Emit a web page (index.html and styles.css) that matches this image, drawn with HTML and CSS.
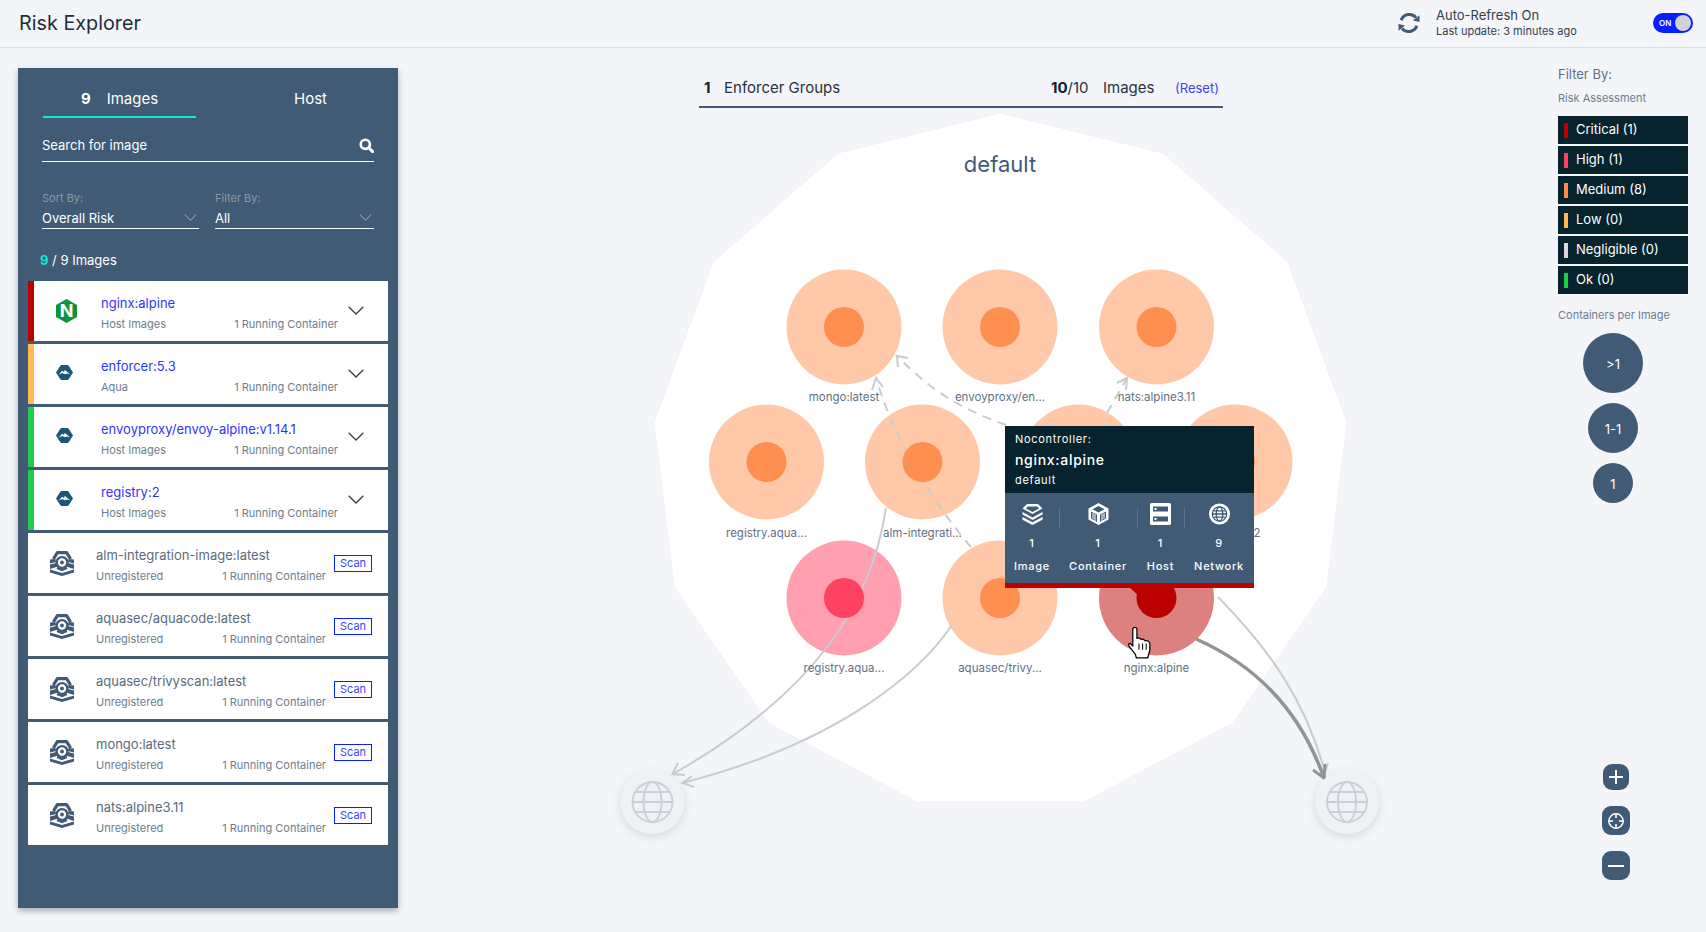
FILE: index.html
```html
<!DOCTYPE html>
<html lang="en">
<head>
<meta charset="utf-8">
<title>Risk Explorer</title>
<link rel="stylesheet" href="styles.css">
</head>
<body>
<svg class="defs" width="0" height="0" aria-hidden="true">
  <symbol id="i-aqua" viewBox="0 0 17 15">
    <path d="M5 .5h7L16.5 7.5 12 14.5H5L.5 7.5z" fill="#1c5678" stroke="#1c5678" stroke-linejoin="round"/>
    <path d="M2.6 9.6 6.2 5.8 7.6 6.9 8.9 4.9 14.4 9.6 11.4 8.4 8.9 9.2 6.3 8.1z" fill="#fff"/>
  </symbol>
  <symbol id="i-scan" viewBox="0 0 24 25">
    <path d="M3.4 8 7.4 1.600h9.200L20.600 8" fill="none" stroke="#415a75" stroke-width="3.200" stroke-linejoin="round"/>
    <path d="M0 8.500 5.500 8 6 11 0 12.500zM24 8.500 18.500 8 18 11 24 12.500zM0 13.500l6-1.500 2 3.500L0 18zM24 13.500l-6-1.500-2 3.500 8 2.500z" fill="#415a75"/>
    <circle cx="12" cy="11.500" r="5.400" fill="#fff" stroke="#415a75" stroke-width="2.400"/>
    <circle cx="12" cy="11.500" r="1.900" fill="#415a75"/>
    <path d="M0 18.500 12 22l12-3.500v3L12 25 0 21.500z" fill="#415a75"/>
    <path d="M7 17 12 19l5-2" fill="none" stroke="#415a75" stroke-width="2.200"/>
  </symbol>
  <symbol id="i-chev" viewBox="0 0 16 9">
    <path d="M.7.7 8 8 15.3.7" fill="none" stroke="currentColor" stroke-width="1.3"/>
  </symbol>
</svg>

<header class="topbar">
  <h1 class="page-title">Risk Explorer</h1>
  <svg class="refresh" viewBox="0 0 22 22">
    <path d="M3.2 8.2A8.6 8.6 0 0 1 18 5.6" fill="none" stroke="#415a75" stroke-width="3"/>
    <path d="M18.8 13.8A8.6 8.6 0 0 1 4 16.4" fill="none" stroke="#415a75" stroke-width="3"/>
    <path d="M21.5 3.2 21.5 10 15 8.4zM.5 18.8.5 12 7 13.6z" fill="#415a75"/>
  </svg>
  <div class="refresh-text">
    <div class="refresh-title">Auto-Refresh On</div>
    <div class="refresh-sub">Last update: 3 minutes ago</div>
  </div>
  <div class="toggle"><span class="toggle-label">ON</span><span class="toggle-knob"></span></div>
</header>

<main class="main">
  <aside class="sidebar">
    <div class="side-head">
      <div class="tabs">
        <div class="tab tab-active"><b class="tab-num">9</b>Images</div>
        <div class="tab tab-other">Host</div>
      </div>
      <div class="search">
        <span>Search for image</span>
        <svg class="search-icon" viewBox="0 0 15 15">
          <circle cx="6.3" cy="6.3" r="4.6" fill="none" stroke="#fff" stroke-width="2.6"/>
          <path d="M9.8 9.8 13.6 13.6" stroke="#fff" stroke-width="3" stroke-linecap="round"/>
        </svg>
      </div>
      <div class="selects">
        <div class="select select-a">
          <div class="select-label">Sort By:</div>
          <div class="select-value"><span>Overall Risk</span><svg class="select-chev"><use href="#i-chev"/></svg></div>
        </div>
        <div class="select select-b">
          <div class="select-label">Filter By:</div>
          <div class="select-value"><span>All</span><svg class="select-chev"><use href="#i-chev"/></svg></div>
        </div>
      </div>
      <div class="count"><b class="count-num">9</b> / 9 Images</div>
    </div>
    <ul class="list">
      <li class="item item-risk bar-critical">
        <svg class="logo-n" viewBox="0 0 21 24">
          <polygon points="10.5,0 21,6 21,18 10.5,24 0,18 0,6" fill="#0b9440"/>
          <text x="10.5" y="18" class="logo-n-text">N</text>
        </svg>
        <div class="item-body"><div class="item-title link">nginx:alpine</div><div class="item-sub"><span>Host Images</span><span>1 Running Container</span></div></div>
        <svg class="item-chev"><use href="#i-chev"/></svg>
      </li>
      <li class="item item-risk bar-low">
        <svg class="logo-a"><use href="#i-aqua"/></svg>
        <div class="item-body"><div class="item-title link">enforcer:5.3</div><div class="item-sub"><span>Aqua</span><span>1 Running Container</span></div></div>
        <svg class="item-chev"><use href="#i-chev"/></svg>
      </li>
      <li class="item item-risk bar-ok">
        <svg class="logo-a"><use href="#i-aqua"/></svg>
        <div class="item-body"><div class="item-title link">envoyproxy/envoy-alpine:v1.14.1</div><div class="item-sub"><span>Host Images</span><span>1 Running Container</span></div></div>
        <svg class="item-chev"><use href="#i-chev"/></svg>
      </li>
      <li class="item item-risk bar-ok">
        <svg class="logo-a"><use href="#i-aqua"/></svg>
        <div class="item-body"><div class="item-title link">registry:2</div><div class="item-sub"><span>Host Images</span><span>1 Running Container</span></div></div>
        <svg class="item-chev"><use href="#i-chev"/></svg>
      </li>
      <li class="item item-plain">
        <svg class="logo-s"><use href="#i-scan"/></svg>
        <div class="item-body body-plain"><div class="item-title">alm-integration-image:latest</div><div class="item-sub"><span>Unregistered</span><span>1 Running Container</span></div></div>
        <div class="scan">Scan</div>
      </li>
      <li class="item item-plain">
        <svg class="logo-s"><use href="#i-scan"/></svg>
        <div class="item-body body-plain"><div class="item-title">aquasec/aquacode:latest</div><div class="item-sub"><span>Unregistered</span><span>1 Running Container</span></div></div>
        <div class="scan">Scan</div>
      </li>
      <li class="item item-plain">
        <svg class="logo-s"><use href="#i-scan"/></svg>
        <div class="item-body body-plain"><div class="item-title">aquasec/trivyscan:latest</div><div class="item-sub"><span>Unregistered</span><span>1 Running Container</span></div></div>
        <div class="scan">Scan</div>
      </li>
      <li class="item item-plain">
        <svg class="logo-s"><use href="#i-scan"/></svg>
        <div class="item-body body-plain"><div class="item-title">mongo:latest</div><div class="item-sub"><span>Unregistered</span><span>1 Running Container</span></div></div>
        <div class="scan">Scan</div>
      </li>
      <li class="item item-plain">
        <svg class="logo-s"><use href="#i-scan"/></svg>
        <div class="item-body body-plain"><div class="item-title">nats:alpine3.11</div><div class="item-sub"><span>Unregistered</span><span>1 Running Container</span></div></div>
        <div class="scan">Scan</div>
      </li>
    </ul>
  </aside>

  <section class="stage">
    <div class="stage-head">
      <b class="sh-num">1</b><span class="sh-groups">Enforcer Groups</span>
      <span class="sh-images"><b>10</b>/10</span><span class="sh-img-label">Images</span>
      <span class="sh-reset">(Reset)</span>
    </div>
    <svg class="graph" viewBox="398 108 1160 824">
      <polygon class="hull" points="1000,113 1163,153 1288,262 1347,422 1327,587 1233,723 1084,802 917,802 768,723 674,587 654,422 713,262 838,153"/>

      <g class="n-med">
        <circle class="outer" cx="844" cy="327" r="57.5"/><circle class="outer" cx="1000" cy="327" r="57.5"/><circle class="outer" cx="1156.5" cy="327" r="57.5"/>
        <circle class="outer" cx="766.5" cy="462" r="57.5"/><circle class="outer" cx="922.5" cy="462" r="57.5"/><circle class="outer" cx="1078.5" cy="462" r="57.5"/><circle class="outer" cx="1235" cy="462" r="57.5"/>
        <circle class="outer" cx="1000" cy="598" r="57.5"/>
      </g>
      <circle class="outer-high" cx="844" cy="598" r="57.5"/>
      <circle class="outer-crit" cx="1156.5" cy="598" r="57.5"/>

      <g class="edges">
        <path class="edge" d="M886 508C872 600 820 690 673 774"/>
        <path class="edge" d="M678 763 672.5 774 685 775"/>
        <path class="edge" d="M952 625C925 665 850 740 682 783"/>
        <path class="edge" d="M692 776 682.5 783 694 787"/>
        <path class="edge" d="M1218 597C1270 650 1305 700 1325 772"/>
        <path class="edge" d="M1328 763 1325 773 1318 766"/>
        <path class="edge edge-dash" d="M1006 425C965 410 935 395 896 355"/>
        <path class="edge" d="M908 358 897 356 898 367"/>
        <path class="edge edge-dash" d="M971 547C930 500 890 430 876 377"/>
        <path class="edge" d="M872 390 876 378 883 387"/>
        <path class="edge edge-dash" d="M1107 413 1127 378"/>
        <path class="edge" d="M1117 383 1127 378 1126 390"/>
        <path class="edge-dark" d="M1196 639C1255 665 1300 710 1324 778"/>
        <path class="edge-dark-head" d="M1313 770 1324 778 1325 764"/>
      </g>

      <g class="n-med">
        <circle class="inner" cx="844" cy="327" r="20"/><circle class="inner" cx="1000" cy="327" r="20"/><circle class="inner" cx="1156.5" cy="327" r="20"/>
        <circle class="inner" cx="766.5" cy="462" r="20"/><circle class="inner" cx="922.5" cy="462" r="20"/><circle class="inner" cx="1078.5" cy="462" r="20"/><circle class="inner" cx="1235" cy="462" r="20"/>
        <circle class="inner" cx="1000" cy="598" r="20"/>
      </g>
      <circle class="inner-high" cx="844" cy="598" r="20"/>
      <circle class="inner-crit" cx="1156.5" cy="598" r="20"/>
      <polygon class="inner-crit" points="1128,586 1142,586 1142,599"/>

      <text class="group-name" x="1000" y="172">default</text>
      <text class="n-label" x="844" y="401">mongo:latest</text>
      <text class="n-label" x="1000" y="401">envoyproxy/en...</text>
      <text class="n-label" x="1156.5" y="401">nats:alpine3.11</text>
      <text class="n-label" x="766.5" y="537">registry.aqua...</text>
      <text class="n-label" x="922.5" y="537">alm-integrati...</text>
      <text class="n-label" x="1257" y="537">2</text>
      <text class="n-label" x="844" y="672">registry.aqua...</text>
      <text class="n-label" x="1000" y="672">aquasec/trivy...</text>
      <text class="n-label" x="1156.5" y="672">nginx:alpine</text>

      <g class="globe">
        <circle class="globe-bg" cx="652.5" cy="802" r="32"/>
        <g class="globe-lines">
          <circle cx="652.5" cy="802" r="20"/><ellipse cx="652.5" cy="802" rx="9" ry="20"/><path d="M632.5 802h40M635.5 792h34M635.5 812h34"/>
        </g>
      </g>
      <g class="globe">
        <circle class="globe-bg" cx="1347" cy="802" r="32"/>
        <g class="globe-lines">
          <circle cx="1347" cy="802" r="20"/><ellipse cx="1347" cy="802" rx="9" ry="20"/><path d="M1327 802h40M1330 792h34M1330 812h34"/>
        </g>
      </g>
    </svg>

    <div class="tip">
      <div class="tip-head">
        <div class="tip-kind">Nocontroller:</div>
        <div class="tip-name">nginx:alpine</div>
        <div class="tip-group">default</div>
      </div>
      <div class="tip-stats">
        <div class="stat">
          <svg class="stat-icon" viewBox="0 0 21 22">
            <path d="M5 1h11l4.500 4.500L10.500 11 .5 5.500zM6 3.500 3.800 5.500l6.700 3.400 6.700-3.400L15 3.500z" fill="#fff" fill-rule="evenodd"/>
            <path d="M.5 9 10.500 14.500 20.500 9v2.600L10.500 17 .5 11.600zM.5 14 10.500 19.300 20.500 14v2.700L10.500 22 .5 16.700z" fill="#fff"/>
          </svg>
          <div class="stat-num">1</div><div class="stat-label">Image</div>
        </div>
        <div class="stat stat-sep">
          <svg class="stat-icon" viewBox="0 0 21 22">
            <path d="M10.500 0 20.500 5.500v11L10.500 22 .5 16.500v-11z" fill="#fff"/>
            <path d="M10.500 3 16.500 6.200 10.500 9.400 4.500 6.200z" fill="#415a75"/>
            <path d="M3 8.500 9 11.500V19L3 15.500zM12 11.500 18 8.500v7L12 19z" fill="#415a75"/>
            <path d="M5 10v6M7 11v7M14 11v7M16 10v6" stroke="#fff" stroke-width="1"/>
          </svg>
          <div class="stat-num">1</div><div class="stat-label">Container</div>
        </div>
        <div class="stat stat-sep">
          <svg class="stat-icon" viewBox="0 0 21 22">
            <rect x="0" y="0" width="21" height="22" rx="1.500" fill="#fff"/>
            <rect x="3" y="3.500" width="15" height="5" fill="#415a75"/><rect x="3" y="13.500" width="15" height="5" fill="#415a75"/>
            <rect x="4.500" y="5" width="2" height="2" fill="#fff"/><rect x="4.500" y="15" width="2" height="2" fill="#fff"/>
          </svg>
          <div class="stat-num">1</div><div class="stat-label">Host</div>
        </div>
        <div class="stat stat-sep">
          <svg class="stat-icon" viewBox="0 0 21 22">
            <circle cx="10.500" cy="11" r="10.500" fill="#fff"/>
            <g fill="none" stroke="#415a75" stroke-width="1.300"><circle cx="10.500" cy="11" r="7.200"/><ellipse cx="10.500" cy="11" rx="3.300" ry="7.200"/><path d="M3.500 11h14M5 7.800h11M5 14.200h11"/></g>
          </svg>
          <div class="stat-num">9</div><div class="stat-label">Network</div>
        </div>
      </div>
    </div>

    <svg class="hand" viewBox="0 0 23 32">
      <path d="M5 2.500Q7 .2 9 2.500V12Q11.500 10.800 13 13Q15.500 12 17 14.500Q20 13.500 21.500 16.500V23.500L19.500 31H8.500L7.500 27.500 1.300 19.500Q.3 17 2.500 16.800L5 19.500Z" fill="#fff" stroke="#000" stroke-width="1.200" stroke-linejoin="round"/>
      <path d="M11 17v6M14.500 17v6M18 17v6" stroke="#000" stroke-width="1"/>
    </svg>
  </section>

  <aside class="filters">
    <div class="filters-title">Filter By:</div>
    <div class="filters-sub">Risk Assessment</div>
    <div class="risk-list">
      <div class="risk"><i class="risk-bar rb-critical"></i>Critical (1)</div>
      <div class="risk"><i class="risk-bar rb-high"></i>High (1)</div>
      <div class="risk"><i class="risk-bar rb-medium"></i>Medium (8)</div>
      <div class="risk"><i class="risk-bar rb-low"></i>Low (0)</div>
      <div class="risk"><i class="risk-bar rb-neg"></i>Negligible (0)</div>
      <div class="risk"><i class="risk-bar rb-ok"></i>Ok (0)</div>
    </div>
    <div class="filters-sub cpi">Containers per Image</div>
    <div class="bubbles">
      <div class="bubble b-lg">&gt;1</div>
      <div class="bubble b-md">1-1</div>
      <div class="bubble b-sm">1</div>
    </div>
    <div class="zooms">
      <div class="zbtn z-plus"><svg viewBox="0 0 16 16" class="z-icon"><path d="M8 1v14M1 8h14" stroke="#fff" stroke-width="2" fill="none"/></svg></div>
      <div class="zbtn"><svg viewBox="0 0 18 18" class="z-icon z-target"><circle cx="9" cy="9" r="7.2" fill="none" stroke="#fff" stroke-width="1.5"/><path d="M9 1v5M9 12v5M1 9h5M12 9h5" stroke="#fff" stroke-width="1.5"/></svg></div>
      <div class="zbtn"><svg viewBox="0 0 16 16" class="z-icon"><path d="M0 8h16" stroke="#fff" stroke-width="2" fill="none"/></svg></div>
    </div>
  </aside>
</main>
</body>
</html>
```

FILE: styles.css
```css
* { box-sizing: border-box; }
html, body { margin: 0; padding: 0; }
body {
  width: 1706px;
  height: 932px;
  overflow: hidden;
  background: #f3f5f9;
  font-family: "Inter", "Liberation Sans", sans-serif;
  color: #415a75;
}
.defs { position: absolute; }

/* top bar */
.topbar {
  height: 48px;
  display: flex;
  align-items: center;
  padding: 0 13px 2px 19px;
  border-bottom: 1px solid #d9dce1;
}
.page-title { flex: 1; margin: 0; font-size: 19.8px; font-weight: 400; color: #1e2f3d; }
.refresh { width: 22px; height: 22px; margin-right: 16px; }
.refresh-text { width: 217px; }
.refresh-title { font-size: 13px; line-height: 16px; color: #333f4c; }
.refresh-sub { font-size: 11px; line-height: 16px; color: #333f4c; }
.toggle {
  width: 40px;
  height: 20px;
  border-radius: 10px;
  background: #0a1fff;
  display: flex;
  align-items: center;
  justify-content: space-between;
  padding: 0 2px 0 6px;
}
.toggle-label { font-size: 8px; font-weight: 600; color: #fff; }
.toggle-knob { width: 16px; height: 16px; border-radius: 50%; background: #d2d2d4; }

/* columns */
.main { display: flex; height: 884px; padding-left: 18px; }

/* sidebar */
.sidebar {
  flex: none;
  width: 380px;
  height: 840px;
  margin-top: 20px;
  background: #415a75;
  box-shadow: 0 3px 6px rgba(40, 50, 60, .35);
  color: #fff;
}
.side-head { padding: 21px 24px 0; }
.tabs { display: flex; font-size: 15px; line-height: 20px; }
.tab { flex: none; width: 153px; text-align: center; padding-bottom: 7px; }
.tab-active { margin-left: 1px; border-bottom: 2px solid #14e6d4; height: 29px; }
.tab-other { margin-left: 38px; }
.tab-num { font-weight: 700; margin-right: 16px; }
.search {
  margin-top: 15px;
  height: 29px;
  line-height: 25px;
  font-size: 13px;
  padding-left: 0;
  border-bottom: 1px solid #fff;
  display: flex;
  justify-content: space-between;
  align-items: flex-start;
}
.search-icon { width: 15px; height: 15px; margin-top: 5px; }
.selects { display: flex; margin-top: 29px; gap: 16px; }
.select-a { width: 157px; }
.select-b { width: 159px; }
.select-label { font-size: 11px; line-height: 14px; color: #8a98a8; padding-left: 0; }
.select-value {
  margin-top: 4px;
  font-size: 13px;
  line-height: 18px;
  height: 20px;
  border-bottom: 1px solid #fff;
  display: flex;
  justify-content: space-between;
  align-items: flex-start;
}
.select-chev { width: 13px; height: 7px; margin: 5px 2px 0 0; color: #8a98a8; }
.count { margin: 22px 0 0 -2px; font-size: 13px; line-height: 18px; }
.count-num { color: #14e6d4; font-weight: 700; }

.list { list-style: none; margin: 12px 0 0 10px; padding: 0; width: 360px; display: flex; flex-direction: column; gap: 3px; }
.item { height: 60px; background: #fff; display: flex; align-items: flex-start; }
.item-risk { border-left: 6px solid transparent; }
.bar-critical { border-left-color: #bb0000; }
.bar-low { border-left-color: #ffbb4f; }
.bar-ok { border-left-color: #1fcf45; }
.logo-n { width: 21px; height: 24px; margin: 18px 0 0 22px; flex: none; }
.logo-n-text { font: 700 18px "Inter", sans-serif; fill: #fff; text-anchor: middle; }
.logo-a { width: 17px; height: 15px; margin: 21px 4px 0 22px; flex: none; }
.logo-s { width: 24px; height: 25px; margin: 18px 0 0 22px; flex: none; }
.item-body { width: 237px; margin-left: 24px; padding-top: 13px; flex: none; }
.body-plain { width: 230px; margin-left: 22px; }
.item-title { font-size: 13px; line-height: 18px; color: #5a6b7d; white-space: nowrap; }
.item-title.link { color: #2f35ff; }
.item-sub { margin-top: 4px; display: flex; justify-content: space-between; font-size: 11px; line-height: 16px; color: #6d7d8e; }
.item-chev { width: 16px; height: 9px; margin: 25px 0 0 10px; color: #33414f; flex: none; }
.scan {
  width: 38px;
  height: 17px;
  margin: 22px 0 0 8px;
  border: 1px solid #0a1fff;
  font-size: 11px;
  line-height: 15px;
  text-align: center;
  color: #3a45ff;
  flex: none;
}

/* centre */
.stage { position: relative; flex: none; width: 1160px; }
.stage-head {
  width: 524px;
  height: 60px;
  margin-left: 301px;
  padding-top: 30px;
  border-bottom: 2px solid #415a75;
  display: flex;
  align-items: flex-start;
  font-size: 15px;
  line-height: 20px;
  color: #26323d;
}
.stage-head b { color: #10222e; }
.sh-num { margin-left: 5px; width: 20px; }
.sh-groups { width: 327px; }
.sh-images { width: 52px; }
.sh-img-label { width: 72px; }
.sh-reset { font-size: 13px; color: #3a45ff; }
.graph { display: block; width: 1160px; height: 824px; }
.hull { fill: #fff; stroke: #eff1f4; stroke-width: 1; }
.outer { fill: #ffc8a8; }
.inner { fill: #ff8f50; }
.outer-high { fill: #ff9fb0; }
.inner-high { fill: #ff4262; }
.outer-crit { fill: #dd8080; }
.inner-crit { fill: #bb0000; }
.edge { fill: none; stroke: #c9cccf; stroke-width: 2; }
.edge-dash { stroke-dasharray: 9 7; }
.edge-dark { fill: none; stroke: #929596; stroke-width: 3.5; }
.edge-dark-head { fill: none; stroke: #929596; stroke-width: 3; }
.group-name { font-size: 22px; fill: #415a75; text-anchor: middle; }
.n-label { font-size: 11.5px; fill: #5f7185; text-anchor: middle; }
.globe { filter: drop-shadow(0 3px 5px rgba(60, 70, 80, .16)); }
.globe-bg { fill: #eff1f4; }
.globe-lines { fill: none; stroke: #c6d0d8; stroke-width: 1.8; }

/* tooltip over the graph */
.tip {
  position: absolute;
  left: 607px;
  top: 378px;
  width: 249px;
  height: 162px;
  background: #415a75;
  border-bottom: 5px solid #bb0000;
  color: #fff;
}
.tip-head { height: 67px; background: #07232d; padding: 5px 10px 0; letter-spacing: .7px; }
.tip-kind { font-size: 11px; line-height: 16px; }
.tip-name { font-size: 14px; line-height: 20px; margin-top: 3px; font-weight: 500; }
.tip-group { font-size: 11px; line-height: 16px; margin-top: 2px; }
.tip-stats { display: grid; grid-template-columns: 54px 78px 47px 70px; }
.stat { position: relative; text-align: center; letter-spacing: .7px; font-size: 11px; padding-top: 10px; }
.stat-sep::before {
  content: "";
  position: absolute;
  left: 0;
  top: 15px;
  height: 20px;
  border-left: 1px solid #5d738b;
}
.stat-icon { display: block; width: 21px; height: 22px; margin: 0 auto; }
.stat-num { line-height: 16px; margin-top: 10px; font-weight: 500; }
.stat-label { line-height: 16px; margin-top: 7px; font-weight: 500; }
.hand { position: absolute; left: 729px; top: 578px; width: 25px; height: 33px; }

/* right column */
.filters { flex: none; width: 148px; padding-top: 17px; }
.filters-title { font-size: 13px; line-height: 18px; color: #5f7185; }
.filters-sub { font-size: 11px; line-height: 14px; margin-top: 8px; color: #6d7d8e; }
.risk-list { margin-top: 11px; display: flex; flex-direction: column; gap: 2px; width: 130px; }
.risk {
  height: 28px;
  background: #07232d;
  color: #fff;
  font-size: 13px;
  display: flex;
  align-items: center;
  padding: 0 0 2px 6px;
}
.risk-bar { width: 4px; height: 15px; margin: 2px 8px 0 0; }
.rb-critical { background: #bb0000; }
.rb-high { background: #ff4262; }
.rb-medium { background: #ff8c4a; }
.rb-low { background: #ffbb4f; }
.rb-neg { background: #d8d8d8; }
.rb-ok { background: #1fcf45; }
.cpi { margin-top: 14px; }
.bubbles { margin-top: 11px; width: 110px; display: flex; flex-direction: column; align-items: center; gap: 10px; }
.bubble { border-radius: 50%; background: #415a75; color: #fff; font-size: 13px; padding-top: 1px; display: flex; align-items: center; justify-content: center; }
.b-lg { width: 60px; height: 60px; }
.b-md { width: 50px; height: 50px; }
.b-sm { width: 40px; height: 40px; }
.zooms { margin-top: 261px; width: 116px; display: flex; flex-direction: column; align-items: center; gap: 16px; }
.zbtn { width: 28px; height: 29px; border-radius: 9px; background: #415a75; display: flex; align-items: center; justify-content: center; }
.z-plus { width: 26px; height: 26px; }
.z-icon { width: 16px; height: 16px; }
.z-target { width: 18px; height: 18px; }
```
